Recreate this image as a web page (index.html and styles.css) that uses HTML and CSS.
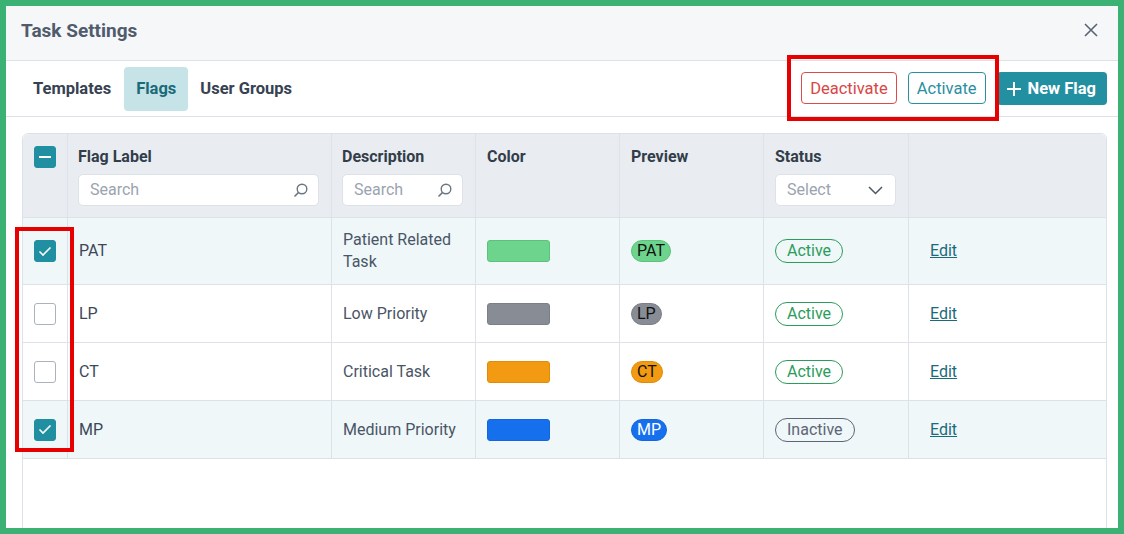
FILE: index.html
```html
<html>
<head>
<title>Task Settings</title>
<link rel="stylesheet" href="styles.css">
</head>
<body>
<div class="frame">
<div class="modal">
  <div class="modal-head">
    <span class="title">Task Settings</span>
    <svg class="close" width="14" height="14" viewBox="0 0 14 14"><path d="M1 1 L13 13 M13 1 L1 13" stroke="#5a6472" stroke-width="1.6" fill="none"/></svg>
  </div>

  <div class="toolbar">
    <div class="tabs">
      <span class="tab">Templates</span>
      <span class="tab active">Flags</span>
      <span class="tab">User Groups</span>
    </div>
    <div class="actions">
      <button class="btn btn-red">Deactivate</button>
      <button class="btn btn-teal">Activate</button>
      <button class="btn btn-new">
        <svg width="16" height="16" viewBox="0 0 16 16"><path d="M8 1 V15 M1 8 H15" stroke="#fff" stroke-width="2" fill="none"/></svg>
        New Flag
      </button>
    </div>
    <div class="mark mark-top"></div>
  </div>

  <div class="grid-wrap">
    <table class="grid">
      <thead>
        <tr>
          <th class="c-check"><span class="cb on"><span class="minus"></span></span></th>
          <th class="c-label">Flag Label
            <div class="field"><span>Search</span>
              <svg width="15" height="15" viewBox="0 0 15 15"><circle cx="9" cy="6" r="4.8" stroke="#6b7580" stroke-width="1.4" fill="none"/><path d="M5.6 9.4 L1.5 13.5" stroke="#6b7580" stroke-width="1.5"/></svg>
            </div>
          </th>
          <th class="c-desc">Description
            <div class="field"><span>Search</span>
              <svg width="15" height="15" viewBox="0 0 15 15"><circle cx="9" cy="6" r="4.8" stroke="#6b7580" stroke-width="1.4" fill="none"/><path d="M5.6 9.4 L1.5 13.5" stroke="#6b7580" stroke-width="1.5"/></svg>
            </div>
          </th>
          <th class="c-color">Color</th>
          <th class="c-prev">Preview</th>
          <th class="c-status">Status
            <div class="field"><span>Select</span>
              <svg width="15" height="9" viewBox="0 0 15 9"><path d="M1 1 L7.5 7.5 L14 1" stroke="#4c5664" stroke-width="1.5" fill="none"/></svg>
            </div>
          </th>
          <th class="c-edit"></th>
        </tr>
      </thead>
      <tbody>
        <tr class="sel">
          <td><span class="cb on"><svg width="14" height="11" viewBox="0 0 14 11"><path d="M1.5 5.5 L5 9 L12.5 1.5" stroke="#fff" stroke-width="1.6" fill="none"/></svg></span></td>
          <td>PAT</td>
          <td class="desc">Patient Related<br>Task</td>
          <td><span class="swatch sw-green"></span></td>
          <td><span class="badge sw-green">PAT</span></td>
          <td><span class="status">Active</span></td>
          <td class="edit"><a href="#">Edit</a></td>
        </tr>
        <tr>
          <td><span class="cb"></span></td>
          <td>LP</td>
          <td class="desc">Low Priority</td>
          <td><span class="swatch sw-gray"></span></td>
          <td><span class="badge sw-gray">LP</span></td>
          <td><span class="status">Active</span></td>
          <td class="edit"><a href="#">Edit</a></td>
        </tr>
        <tr>
          <td><span class="cb"></span></td>
          <td>CT</td>
          <td class="desc">Critical Task</td>
          <td><span class="swatch sw-orange"></span></td>
          <td><span class="badge sw-orange">CT</span></td>
          <td><span class="status">Active</span></td>
          <td class="edit"><a href="#">Edit</a></td>
        </tr>
        <tr class="sel">
          <td><span class="cb on"><svg width="14" height="11" viewBox="0 0 14 11"><path d="M1.5 5.5 L5 9 L12.5 1.5" stroke="#fff" stroke-width="1.6" fill="none"/></svg></span></td>
          <td>MP</td>
          <td class="desc">Medium Priority</td>
          <td><span class="swatch sw-blue"></span></td>
          <td><span class="badge sw-blue">MP</span></td>
          <td><span class="status off">Inactive</span></td>
          <td class="edit"><a href="#">Edit</a></td>
        </tr>
      </tbody>
    </table>
    <div class="mark mark-left"></div>
  </div>
</div>
</div>
</body>
</html>
```

FILE: styles.css
```css
*{
box-sizing:border-box;
}
html,body{
margin:0;
padding:0;
}
body{
font-family:Roboto, "Liberation Sans", sans-serif;
font-size:16.5px;
color:#3c4858;
}
.frame{
width:1124px;
height:534px;
border:6px solid #3bb273;
overflow:hidden;
}
.modal{
height:100%;
background:#fff;
display:flex;
flex-direction:column;
overflow:hidden;
}
.modal-head{
height:55px;
flex:none;
background:#f6f7f9;
border-bottom:1px solid #dde2e8;
display:flex;
align-items:center;
justify-content:space-between;
padding:0 20px 6px 15px;
}
.title{
font-size:19px;
font-weight:700;
color:#505c6c;
}
.toolbar{
position:relative;
height:56px;
flex:none;
border-bottom:1px solid #dde2e8;
display:flex;
align-items:center;
justify-content:space-between;
padding:0 11px 0 15px;
}
.tabs{
display:flex;
gap:0;
}
.tab{
height:44px;
line-height:44px;
padding:0 12px;
font-weight:700;
color:#364252;
border-radius:4px;
}
.tab.active{
margin-left:1px;
background:#c6e3e8;
color:#1b6a79;
}
.actions{
display:flex;
gap:11px;
}
.btn{
height:32px;
font-family:inherit;
font-size:16.5px;
background:#fff;
border-radius:4px;
padding:0 8px;
}
.btn-red{
border:1px solid #dc4b4b;
color:#d94646;
}
.btn-teal{
border:1px solid #2a8fa0;
color:#2a8fa0;
}
.btn-new{
height:33px;
border:none;
background:#2390a1;
color:#fff;
font-weight:700;
display:flex;
align-items:center;
gap:6px;
padding:0 11px 0 9px;
}
.mark{
position:absolute;
border:4px solid #e60000;
}
.mark-top{
left:781px;
top:-6px;
width:212px;
height:66px;
}
.grid-wrap{
position:relative;
margin:16px 11px 0 16px;
height:430px;
flex:none;
border:1px solid #dde2e8;
border-radius:6px;
}
.grid{
width:100%;
table-layout:fixed;
border-collapse:separate;
border-spacing:0;
}
.grid th, .grid td{
border-right:1px solid #dde2e8;
border-bottom:1px solid #dde2e8;
text-align:left;
vertical-align:middle;
padding:11px 11px;
}
.grid th:last-child, .grid td:last-child{
border-right:none;
}
.grid th{
background:#e9edf1;
vertical-align:top;
font-weight:700;
color:#333d4a;
padding:12px 12px 11px 11px;
line-height:22px;
}
.grid th.c-label, .grid th.c-desc{
padding-left:10px;
}
.grid th:first-child{
border-top-left-radius:6px;
}
.grid th:last-child{
border-top-right-radius:6px;
}
.grid td{
line-height:22px;
height:58px;
}
.c-check{ width:45px; }
.c-label{ width:264px; }
.c-desc{ width:144px; }
.c-color{ width:144px; }
.c-prev{ width:144px; }
.c-status{ width:145px; }
.grid th.c-check{
padding:12px 0 0 11px;
}
.grid td:first-child{
padding:0 0 0 11px;
}
.field{
margin-top:6px;
height:32px;
background:#fff;
border:1px solid #dde2e8;
border-radius:5px;
display:flex;
align-items:center;
justify-content:space-between;
padding:0 10px 0 11px;
font-weight:400;
color:#9aa4af;
}
.c-status .field{
padding-right:12px;
}
.cb{
width:22px;
height:22px;
border:1px solid #a9b2bd;
border-radius:3px;
background:#fff;
display:flex;
align-items:center;
justify-content:center;
}
.cb.on{
background:#1f8fa1;
border-color:#1f8fa1;
}
.minus{
width:12px;
height:2px;
background:#fff;
}
.sel td{
background:#eff7f9;
}
.desc{
color:#4a5566;
}
.swatch{
display:block;
width:63px;
height:22px;
border-radius:3px;
}
.sw-green{ background:#6cd48c; border:1px solid #5cc27b; }
.sw-gray{ background:#878c95; border:1px solid #7a7f88; }
.sw-orange{ background:#f29a11; border:1px solid #e08c06; }
.sw-blue{ background:#1670ee; border:1px solid #1466dc; }
.badge{
display:inline-block;
height:22px;
line-height:20px;
padding:0 5px;
border-radius:11px;
color:#111;
}
.badge.sw-blue{
color:#fff;
}
.status{
display:inline-block;
height:24px;
line-height:22px;
padding:0 11px;
border:1px solid #2a9d5a;
border-radius:12px;
color:#2a9d5a;
}
.status.off{
border-color:#5c6675;
color:#5c6675;
}
.grid td.edit{
padding-left:21px;
}
.edit a{
color:#1b6a7b;
text-decoration:underline;
}
.mark-left{
left:-8px;
top:93px;
width:59px;
height:225px;
}
```
